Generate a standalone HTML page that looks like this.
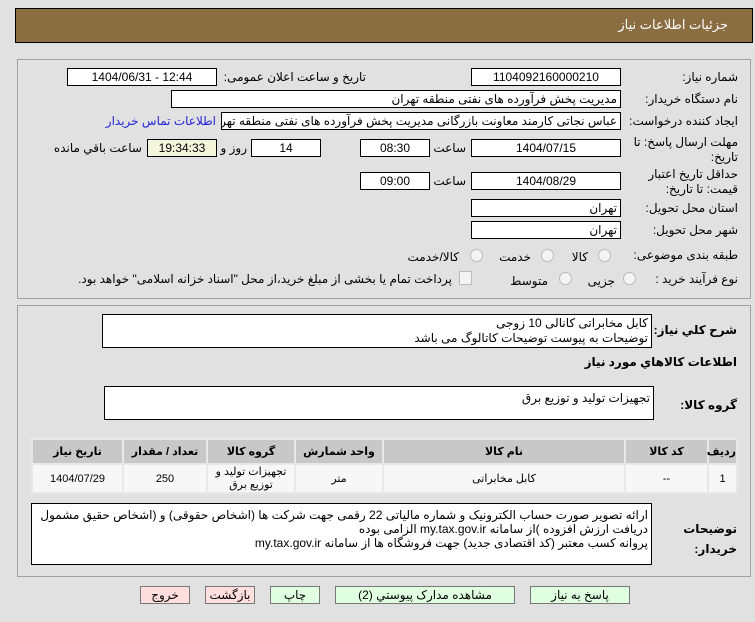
<!DOCTYPE html>
<html><head><meta charset="utf-8"><style>
body{margin:0;width:755px;height:622px;background:#e1e1e1;font-family:"Liberation Sans","DejaVu Sans",sans-serif;font-size:12px;color:#000;position:relative;overflow:hidden}
.a{position:absolute}
.bx{position:absolute;background:#fff;border:1px solid #000;box-sizing:border-box;white-space:nowrap;overflow:hidden;line-height:16px}
.c{text-align:center}
.r{text-align:right;padding-right:3px;direction:rtl}
.l{position:absolute;direction:rtl;white-space:nowrap;text-align:right}
.pan{position:absolute;border:1px solid #a0a0a0;box-sizing:border-box}
.rad{position:absolute;width:11px;height:11px;border:1px solid #bbb;border-radius:50%;background:#f4f4f4}
table{border-collapse:separate;border-spacing:2px;background:#e8e8e8;table-layout:fixed}
td{text-align:center;font-size:11px;padding:0;background:#f7f7f7;height:27px}
th{background:#c8c8c8;font-size:11px;height:23px;padding:0}
.btn{position:absolute;top:586px;height:18px;border:1px solid #777;box-sizing:border-box;text-align:center;line-height:16px;font-size:12px;direction:rtl}
.g{background:#e0ffe0}.p{background:#ffdede}
</style></head><body>
<div class="a" style="left:15px;top:8px;width:738px;height:35px;background:#8b6d42;border:1px solid #000;box-sizing:border-box"></div>
<div class="l" style="right:27px;top:17px;color:#fff;font-size:13px">جزئیات اطلاعات نیاز</div>

<div class="pan" style="left:17px;top:59px;width:734px;height:240px"></div>
<div class="l" style="right:17px;top:70px">شماره نیاز:</div>
<div class="bx c" style="left:471px;top:68px;width:150px;height:18px">1104092160000210</div>
<div class="l" style="right:389px;top:70px">تاریخ و ساعت اعلان عمومی:</div>
<div class="bx c" style="left:67px;top:68px;width:150px;height:18px">1404/06/31 - 12:44</div>

<div class="l" style="right:17px;top:92px">نام دستگاه خریدار:</div>
<div class="bx r" style="left:171px;top:90px;width:450px;height:18px">مدیریت پخش فرآورده های نفتی منطقه تهران</div>

<div class="l" style="right:17px;top:114px">ایجاد کننده درخواست:</div>
<div class="bx r" style="left:221px;top:112px;width:400px;height:18px">عباس نجاتی کارمند معاونت بازرگانی مدیریت پخش فرآورده های نفتی منطقه تهران</div>
<div class="l" style="right:539px;top:114px;color:#2222dd">اطلاعات تماس خریدار</div>

<div class="l" style="right:17px;top:135px;line-height:15px">مهلت ارسال پاسخ: تا<br>تاریخ:</div>
<div class="bx c" style="left:471px;top:139px;width:150px;height:18px">1404/07/15</div>
<div class="l" style="right:289px;top:141px">ساعت</div>
<div class="bx c" style="left:360px;top:139px;width:70px;height:18px">08:30</div>
<div class="bx c" style="left:251px;top:139px;width:70px;height:18px">14</div>
<div class="l" style="right:508px;top:141px">روز و</div>
<div class="bx c" style="left:147px;top:139px;width:70px;height:18px;background:#f5f5dc">19:34:33</div>
<div class="l" style="right:613px;top:141px">ساعت باقي مانده</div>

<div class="l" style="right:17px;top:167px;line-height:15px">حداقل تاریخ اعتبار<br>قیمت: تا تاریخ:</div>
<div class="bx c" style="left:471px;top:172px;width:150px;height:18px">1404/08/29</div>
<div class="l" style="right:289px;top:174px">ساعت</div>
<div class="bx c" style="left:360px;top:172px;width:70px;height:18px">09:00</div>

<div class="l" style="right:17px;top:201px">استان محل تحویل:</div>
<div class="bx r" style="left:471px;top:199px;width:150px;height:18px">تهران</div>
<div class="l" style="right:17px;top:223px">شهر محل تحویل:</div>
<div class="bx r" style="left:471px;top:221px;width:150px;height:18px">تهران</div>

<div class="l" style="right:17px;top:248px">طبقه بندی موضوعی:</div>
<div class="rad" style="left:598px;top:249px"></div><div class="l" style="right:167px;top:250px">کالا</div>
<div class="rad" style="left:541px;top:249px"></div><div class="l" style="right:224px;top:250px">خدمت</div>
<div class="rad" style="left:470px;top:249px"></div><div class="l" style="right:296px;top:250px">کالا/خدمت</div>

<div class="l" style="right:17px;top:272px">نوع فرآیند خرید :</div>
<div class="rad" style="left:623px;top:272px"></div><div class="l" style="right:140px;top:274px">جزیی</div>
<div class="rad" style="left:559px;top:272px"></div><div class="l" style="right:207px;top:274px">متوسط</div>
<div class="a" style="left:459px;top:271px;width:11px;height:12px;border:1px solid #bbb;background:#f4f4f4"></div>
<div class="l" style="right:303px;top:272px">پرداخت تمام یا بخشی از مبلغ خرید،از محل "اسناد خزانه اسلامی" خواهد بود.</div>

<div class="pan" style="left:17px;top:305px;width:734px;height:272px"></div>
<div class="l" style="right:18px;top:323px;font-weight:bold">شرح کلي نیاز:</div>
<div class="bx r" style="left:102px;top:314px;width:550px;height:34px;line-height:15px;padding-top:1px">کابل مخابراتی کانالی 10 زوجی<br>توضیحات به پیوست توضیحات کاتالوگ می باشد</div>
<div class="l" style="right:18px;top:355px;font-weight:bold">اطلاعات کالاهاي مورد نیاز</div>
<div class="l" style="right:18px;top:398px;font-weight:bold">گروه کالا:</div>
<div class="bx r" style="left:104px;top:386px;width:550px;height:34px;padding-top:3px">تجهیزات تولید و توزیع برق</div>

<table class="a" style="left:31px;top:438px;width:707px;direction:rtl">
<colgroup><col style="width:27px"><col style="width:81px"><col><col style="width:86px"><col style="width:86px"><col style="width:82px"><col style="width:89px"></colgroup>
<tr><th>ردیف</th><th>کد کالا</th><th>نام کالا</th><th>واحد شمارش</th><th>گروه کالا</th><th>تعداد / مقدار</th><th>تاریخ نیاز</th></tr>
<tr><td>1</td><td>--</td><td>کابل مخابراتی</td><td>متر</td><td style="line-height:13px">تجهیزات تولید و<br>توزیع برق</td><td>250</td><td>1404/07/29</td></tr>
</table>

<div class="l" style="right:18px;top:519px;font-weight:bold;line-height:20px">توضیحات<br>خریدار:</div>
<div class="bx r" style="left:31px;top:503px;width:621px;height:62px;line-height:14px;padding-top:4px;white-space:normal">ارائه  تصویر صورت حساب الکترونیک و شماره مالیاتی 22 رقمی  جهت شرکت ها (اشخاص حقوقی) و (اشخاص حقیق مشمول دریافت ارزش افزوده )از سامانه my.tax.gov.ir  الزامی بوده<br>پروانه کسب معتبر (کد اقتصادی جدید) جهت فروشگاه ها از سامانه my.tax.gov.ir</div>

<div class="btn p" style="left:140px;width:50px">خروج</div>
<div class="btn p" style="left:205px;width:50px">بازگشت</div>
<div class="btn g" style="left:270px;width:50px">چاپ</div>
<div class="btn g" style="left:335px;width:180px">مشاهده مدارک پیوستي (2)</div>
<div class="btn g" style="left:530px;width:100px">پاسخ به نیاز</div>
</body></html>
